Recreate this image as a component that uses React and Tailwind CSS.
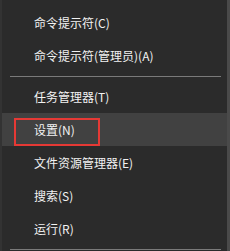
import React from "react";

const groups = [
  ["命令提示符(C)", "命令提示符(管理员)(A)"],
  ["任务管理器(T)", "设置(N)", "文件资源管理器(E)", "搜索(S)", "运行(R)"],
];

const MenuItem = ({ label, active }) => (
  <div className={`relative h-[33px] flex items-center pl-[32px] ${active ? "bg-[#414141]" : ""}`}>
    {active && (
      <div className="absolute left-[12px] top-[5px] w-[86px] h-[28px] border-2 border-[#e53935]" />
    )}
    <span className="text-[12px] leading-none text-[#f2f2f2]">{label}</span>
  </div>
);

export default function App() {
  return (
    <div
      className="w-[230px] h-[251px] bg-[#2b2b2b] border-l-2 border-l-[#333333] border-r-[3px] border-r-[#4a4a4a] overflow-hidden pt-[6px]"
      style={{ fontFamily: '"Noto Sans CJK SC", "Noto Sans", sans-serif' }}
    >
      {groups[0].map((l) => (
        <MenuItem key={l} label={l} />
      ))}
      <div className="h-[8px] flex items-center pl-[8px] pr-[6px]">
        <div className="h-px w-full bg-[#7a7a7a]" />
      </div>
      {groups[1].map((l) => (
        <MenuItem key={l} label={l} active={l === "设置(N)"} />
      ))}
      <div className="h-[9px] flex items-center pl-[8px] pr-[6px]">
        <div className="h-px w-full bg-[#7a7a7a]" />
      </div>
    </div>
  );
}
